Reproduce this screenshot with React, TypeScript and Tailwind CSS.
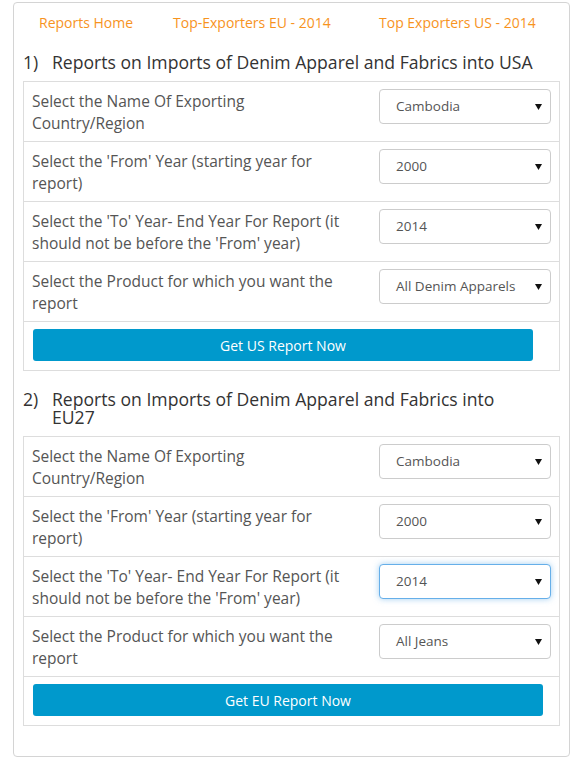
import React from 'react';

type Row = { label: string; value: string; focused?: boolean };

const usRows: Row[] = [
  { label: 'Select the Name Of Exporting Country/Region', value: 'Cambodia' },
  { label: "Select the 'From' Year (starting year for report)", value: '2000' },
  { label: "Select the 'To' Year- End Year For Report (it should not be before the 'From' year)", value: '2014' },
  { label: 'Select the Product for which you want the report', value: 'All Denim Apparels' },
];

const euRows: Row[] = [
  { label: 'Select the Name Of Exporting Country/Region', value: 'Cambodia' },
  { label: "Select the 'From' Year (starting year for report)", value: '2000' },
  { label: "Select the 'To' Year- End Year For Report (it should not be before the 'From' year)", value: '2014', focused: true },
  { label: 'Select the Product for which you want the report', value: 'All Jeans' },
];

const FakeSelect = ({ value, focused }: { value: string; focused?: boolean }) => (
  <div
    className={`flex items-center justify-between w-[172px] h-[35px] pl-[16px] pr-[8px] rounded-[4px] bg-white text-[13.5px] text-[#555] border ${
      focused ? 'border-[#66afe9] shadow-[0_0_6px_rgba(102,175,233,0.6)]' : 'border-[#ccc]'
    }`}
  >
    <span>{value}</span>
    <svg width="7" height="6" viewBox="0 0 7 6">
      <path d="M0 0 L7 0 L3.5 6 Z" fill="#111" />
    </svg>
  </div>
);

const ReportTable = ({ rows, button, buttonWidth }: { rows: Row[]; button: string; buttonWidth: string }) => (
  <div className="border border-[#ddd]">
    {rows.map((row, i) => (
      <div key={i} className="flex h-[60px] border-b border-[#ddd]">
        <div className="w-[328px] pl-[8px] pt-[8px] text-[15.5px] leading-[22px] text-[#555]">{row.label}</div>
        <div className="ml-auto pt-[7px] pr-[8px]">
          <FakeSelect value={row.value} focused={row.focused} />
        </div>
      </div>
    ))}
    <div className="h-[48px] pt-[7px] pl-[9px]">
      <button className={`${buttonWidth} h-[32px] rounded-[3px] bg-[#0099cc] text-white text-[14px]`}>{button}</button>
    </div>
  </div>
);

export default function App() {
  return (
    <div className="w-[572px] h-[768px] bg-white pt-[2px] pl-[13px]" style={{ fontFamily: '"Open Sans", sans-serif' }}>
      <div className="w-[557px] h-[755px] border border-[#d4d4d4] rounded-[4px] px-[9px]">
        <nav className="flex pt-[10px] pl-[16px] text-[14px] leading-[20px] text-[#f7931e]">
          <a className="w-[134px]">Reports Home</a>
          <a className="w-[206px]">Top-Exporters EU - 2014</a>
          <a>Top Exporters US - 2014</a>
        </nav>

        <h3 className="flex mt-[20px] mb-[10px] text-[17.6px] leading-[18px] text-[#333]">
          <span className="w-[29px] shrink-0">1)</span>
          <span>Reports on Imports of Denim Apparel and Fabrics into USA</span>
        </h3>
        <ReportTable rows={usRows} button="Get US Report Now" buttonWidth="w-[500px]" />

        <h3 className="flex mt-[19px] mb-[10px] text-[17.6px] leading-[18px] text-[#333]">
          <span className="w-[29px] shrink-0">2)</span>
          <span>
            Reports on Imports of Denim Apparel and Fabrics into
            <br />
            EU27
          </span>
        </h3>
        <ReportTable rows={euRows} button="Get EU Report Now" buttonWidth="w-[510px]" />
      </div>
    </div>
  );
}
